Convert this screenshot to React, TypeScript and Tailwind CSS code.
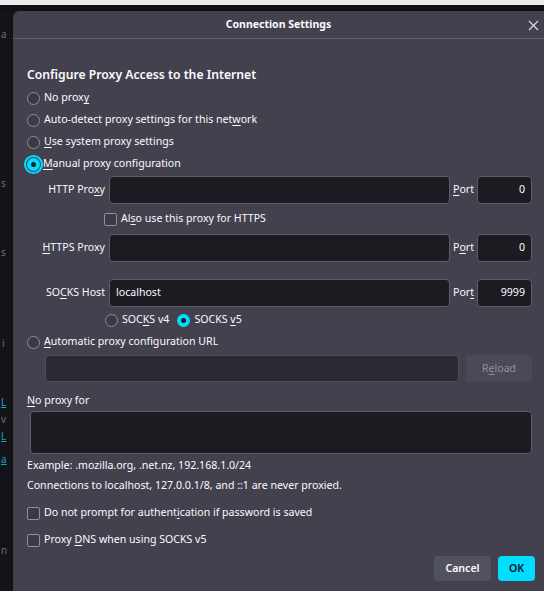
import type { ReactNode } from "react"

// access-key underline
const K = ({ children }: { children: ReactNode }) => (
  <span className="underline underline-offset-[2px] decoration-1">{children}</span>
)

function Radio({ checked = false, focused = false }: { checked?: boolean; focused?: boolean }) {
  if (checked) {
    return (
      <span
        className={
          focused
            ? "w-[13px] h-[13px] shrink-0 rounded-full bg-[#00ddff] flex items-center justify-center outline-2 outline-[#00ddff] outline-offset-[1px]"
            : "w-[13px] h-[13px] shrink-0 rounded-full bg-[#00ddff] flex items-center justify-center"
        }
      >
        <span className="w-[5px] h-[5px] rounded-full bg-[#1c1b22]" />
      </span>
    )
  }
  return <span className="w-[13px] h-[13px] shrink-0 rounded-full border border-[#8f8f9d] bg-[#3a3944]" />
}

const Checkbox = () => (
  <span className="w-[13px] h-[13px] shrink-0 rounded-[2px] border border-[#8f8f9d] bg-[#3a3944]" />
)

function ProxyRow({ label, value = "", port, portLabel }: { label: ReactNode; value?: string; port: string; portLabel: ReactNode }) {
  return (
    <div className="flex items-center h-[28px]">
      <div className="w-[79px] text-right pr-[1px]">{label}</div>
      <div className="ml-[3px] flex-1 h-full rounded-[4px] border border-[#5d5c67] bg-[#1c1b22] flex items-center px-[6px]">
        {value}
      </div>
      <div className="w-[27px] pl-[3px]">{portLabel}</div>
      <div className="w-[55px] h-full rounded-[4px] border border-[#5d5c67] bg-[#1c1b22] flex items-center justify-end px-[6px]">
        {port}
      </div>
    </div>
  )
}

export default function App() {
  return (
    <div className="w-[544px] h-[591px] overflow-hidden bg-[#111014] flex flex-col font-['Noto_Sans',sans-serif]">
      <div className="h-[5px] shrink-0 bg-[#ececec]" />
      <div className="flex flex-1 min-h-0 pt-[6px]">
        {/* page behind the dialog */}
        <div className="w-[13px] shrink-0 overflow-hidden bg-[#141318] text-[10px] text-[#6f6e7a] flex flex-col">
          <div className="mt-[16px] ml-[1px]">a</div>
          <div className="mt-[134px] ml-[1px]">s</div>
          <div className="mt-[54px] ml-[1px]">s</div>
          <div className="mt-[76px] ml-[2px]">i</div>
          <div className="mt-[44px] ml-[1px] text-[#0fa6c2] underline">L</div>
          <div className="mt-[2px] ml-[1px]">v</div>
          <div className="mt-[2px] ml-[1px] text-[#0fa6c2] underline">L</div>
          <div className="mt-[8px] ml-[1px] text-[#0fa6c2] underline">a</div>
          <div className="mt-[76px] ml-[1px]">n</div>
        </div>

        <div className="flex-1 rounded-tl-[6px] bg-[#42414d] text-[#fbfbfe] text-[10.6px] flex flex-col">
          <div className="h-[28px] shrink-0 relative flex items-center justify-center border-b border-[#5e5d69]">
            <span className="font-bold text-[10.5px]">Connection Settings</span>
            <svg className="absolute right-[5px] top-[9px]" width="11" height="11" viewBox="0 0 11 11">
              <path d="M1 1L10 10M10 1L1 10" stroke="#d8d8de" strokeWidth="1.3" />
            </svg>
          </div>

          <div className="pl-[14px] pr-[12px] pt-[26px] flex flex-col">
            <div className="h-[20px] leading-[20px] text-[12.2px] font-semibold">
              Configure Proxy Access to the Internet
            </div>

            <div className="mt-[2px] h-[22px] flex items-center gap-[4px]">
              <Radio />
              <span>No prox<K>y</K></span>
            </div>
            <div className="h-[22px] flex items-center gap-[4px]">
              <Radio />
              <span>Auto-detect proxy settings for this net<K>w</K>ork</span>
            </div>
            <div className="h-[22px] flex items-center gap-[4px]">
              <Radio />
              <span><K>U</K>se system proxy settings</span>
            </div>
            <div className="h-[22px] flex items-center gap-[3px]">
              <Radio checked focused />
              <span><K>M</K>anual proxy configuration</span>
            </div>

            <div className="mt-[1px]">
              <ProxyRow label={<>HTTP Pro<K>x</K>y</>} port="0" portLabel={<><K>P</K>ort</>} />
            </div>
            <div className="mt-[4px] h-[22px] flex items-center gap-[4px] ml-[77px]">
              <Checkbox />
              <span>Al<K>s</K>o use this proxy for HTTPS</span>
            </div>
            <div className="mt-[4px]">
              <ProxyRow label={<><K>H</K>TTPS Proxy</>} port="0" portLabel={<>P<K>o</K>rt</>} />
            </div>
            <div className="mt-[17px]">
              <ProxyRow label={<>SO<K>C</K>KS Host</>} value="localhost" port="9999" portLabel={<>Por<K>t</K></>} />
            </div>
            <div className="mt-[2px] h-[22px] flex items-center ml-[78px]">
              <Radio />
              <span className="ml-[4px]">SOC<K>K</K>S v4</span>
              <span className="ml-[8px]" />
              <Radio checked />
              <span className="ml-[4px]">SOCKS <K>v</K>5</span>
            </div>
            <div className="h-[22px] flex items-center gap-[4px]">
              <Radio />
              <span><K>A</K>utomatic proxy configuration URL</span>
            </div>
            <div className="mt-[2px] h-[27px] flex ml-[18px] gap-[7px]">
              <div className="flex-1 rounded-[4px] border border-[#4e4d58] bg-[#2b2a33]" />
              <div className="w-[66px] rounded-[4px] bg-[#4a4955] text-[#8f8f9d] flex items-center justify-center">
                R<K>e</K>load
              </div>
            </div>

            <div className="mt-[9px] h-[20px] flex items-center">
              <span><K>N</K>o proxy for</span>
            </div>
            <div className="ml-[3px] h-[43px] rounded-[4px] border border-[#5d5c67] bg-[#1c1b22]" />
            <div className="mt-[2px] h-[20px] flex items-center">
              Example: .mozilla.org, .net.nz, 192.168.1.0/24
            </div>
            <div className="h-[20px] flex items-center">
              Connections to localhost, 127.0.0.1/8, and ::1 are never proxied.
            </div>

            <div className="mt-[6px] h-[22px] flex items-center gap-[4px]">
              <Checkbox />
              <span>Do not prompt for authent<K>i</K>cation if password is saved</span>
            </div>
            <div className="mt-[5px] h-[22px] flex items-center gap-[4px]">
              <Checkbox />
              <span>Proxy <K>D</K>NS when using SOCKS v5</span>
            </div>

            <div className="mt-[5px] -mr-[3px] flex justify-end gap-[7px]">
              <button className="w-[57px] h-[25px] rounded-[4px] bg-[#52515e] font-semibold">Cancel</button>
              <button className="w-[37px] h-[25px] rounded-[4px] bg-[#00ddff] text-[#15141a] font-semibold">OK</button>
            </div>
          </div>
        </div>
      </div>
    </div>
  )
}
